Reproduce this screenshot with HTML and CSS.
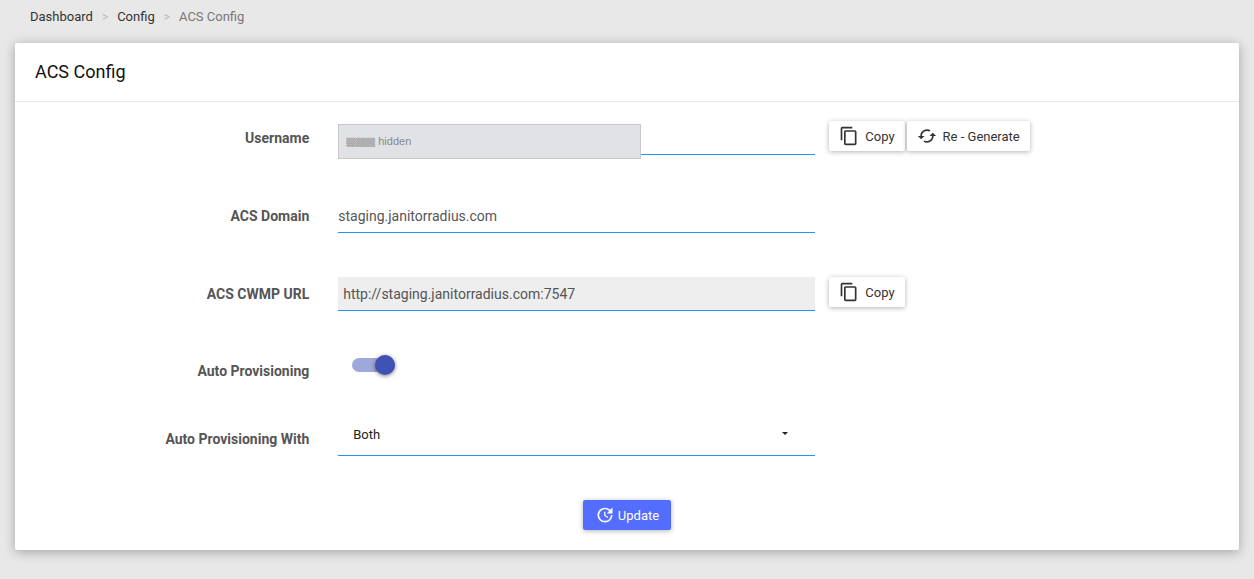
FILE: index.html
```html
<!DOCTYPE html>
<html lang="en">
<head>
<meta charset="UTF-8">
<meta name="viewport" content="width=device-width, initial-scale=1.0">
<title>ACS Config</title>
<link rel="stylesheet" href="styles.css">
</head>
<body>

<nav class="breadcrumb" aria-label="Breadcrumb">
    <a href="#">Dashboard</a>
    <span class="separator">&gt;</span>
    <a href="#">Config</a>
    <span class="separator">&gt;</span>
    <span class="current">ACS Config</span>
</nav>

<main class="card">
    <h1 class="card-title">ACS Config</h1>
    <form class="config-form">
        <div class="row">
            <label class="name" for="username">Username</label>
            <div class="field">
                <input type="text" id="username" class="text-input">
                <div class="mask"><span class="blocks">▒▒▒▒▒▒</span> hidden</div>
            </div>
            <div class="actions">
                <button type="button" class="btn">
                    <svg class="icon" viewBox="0 0 24 24"><path d="M16 1H4c-1.100 0-2 .9-2 2v14h2V3h12V1zm3 4H8c-1.100 0-2 .9-2 2v14c0 1.100.9 2 2 2h11c1.100 0 2-.9 2-2V7c0-1.100-.9-2-2-2zm0 16H8V7h11v14z"/></svg>
                    Copy
                </button>
                <button type="button" class="btn">
                    <svg class="icon" viewBox="0 0 24 24"><path d="M19 8l-4 4h3c0 3.310-2.690 6-6 6-1.010 0-1.970-.25-2.800-.7l-1.460 1.460C8.970 19.540 10.430 20 12 20c4.420 0 8-3.580 8-8h3l-4-4zM6 12c0-3.310 2.690-6 6-6 1.010 0 1.970.25 2.800.7l1.460-1.460C15.030 4.460 13.570 4 12 4c-4.420 0-8 3.580-8 8H1l4 4 4-4H6z"/></svg>
                    Re - Generate
                </button>
            </div>
        </div>
        <div class="row">
            <label class="name" for="domain">ACS Domain</label>
            <div class="field">
                <input type="text" id="domain" class="text-input" value="staging.janitorradius.com">
            </div>
        </div>
        <div class="row url-row">
            <label class="name" for="url">ACS CWMP URL</label>
            <div class="field">
                <input type="text" id="url" class="text-input readonly" value="http://staging.janitorradius.com:7547" readonly>
            </div>
            <div class="actions">
                <button type="button" class="btn">
                    <svg class="icon" viewBox="0 0 24 24"><path d="M16 1H4c-1.100 0-2 .9-2 2v14h2V3h12V1zm3 4H8c-1.100 0-2 .9-2 2v14c0 1.100.9 2 2 2h11c1.100 0 2-.9 2-2V7c0-1.100-.9-2-2-2zm0 16H8V7h11v14z"/></svg>
                    Copy
                </button>
            </div>
        </div>
        <div class="row toggle-row">
            <label class="name" for="auto">Auto Provisioning</label>
            <div class="field">
                <input type="checkbox" id="auto" class="toggle" checked>
            </div>
        </div>
        <div class="row">
            <label class="name" for="with">Auto Provisioning With</label>
            <div class="field select-field">
                <select id="with" class="select">
                    <option>Both</option>
                </select>
            </div>
        </div>
        <div class="submit">
            <button type="submit" class="btn primary">
                <svg class="icon" viewBox="0 0 24 24"><path d="M21 10.120h-6.780l2.740-2.820c-2.730-2.700-7.150-2.800-9.880-.1-2.730 2.710-2.730 7.080 0 9.790s7.150 2.710 9.880 0C18.320 15.650 19 14.080 19 12.100h2c0 1.980-.88 4.550-2.640 6.290-3.510 3.480-9.210 3.480-12.720 0-3.500-3.470-3.530-9.110-.02-12.580s9.140-3.470 12.650 0L21 3v7.120zM12.500 8v4.250l3.500 2.080-.72 1.210L11 13V8h1.500z"/></svg>
                Update
            </button>
        </div>
    </form>
</main>

</body>
</html>
```
FILE: styles.css
```css
* {
    box-sizing: border-box;
}
body {
    margin: 0;
    padding: 0 15px 29px;
    font-family: Roboto, Arial, sans-serif;
    font-size: 13px;
    color: #212121;
    background-color: #e8e8e8;
}
.breadcrumb {
    display: flex;
    gap: 9px;
    padding: 9px 15px 0;
    height: 43px;
    line-height: 16px;
}
.breadcrumb a {
    color: #333;
    text-decoration: none;
}
.breadcrumb .separator {
    color: #bbb;
    font-size: 12px;
}
.breadcrumb .current {
    color: #777;
}
.card {
    background-color: #fff;
    border-radius: 2px;
    box-shadow: 0 2px 12px rgba(0, 0, 0, 0.3);
}
.card-title {
    margin: 0;
    padding: 18px 20px;
    font-size: 18px;
    font-weight: 400;
    line-height: 22px;
    color: #111;
    border-bottom: 1px solid #e8e8e8;
}
.config-form {
    padding: 19px 28px 20px 23px;
}
.row {
    display: grid;
    grid-template-columns: 3fr 5fr 4fr;
    column-gap: 14px;
    min-height: 34px;
    margin-bottom: 44px;
}
.name {
    padding-right: 15px;
    font-size: 14px;
    font-weight: 700;
    line-height: 34px;
    color: #555;
    text-align: right;
}
.field {
    position: relative;
}
.text-input {
    display: block;
    width: 100%;
    height: 34px;
    padding: 0;
    border: none;
    border-bottom: 1px solid #2196f3;
    font-family: inherit;
    font-size: 14px;
    color: #555;
    background-color: #fff;
}
.text-input.readonly {
    padding: 0 5px;
    background-color: #eee;
}
.mask {
    position: absolute;
    top: 3px;
    left: 0;
    width: 303px;
    max-width: 100%;
    height: 35px;
    padding: 0 7px;
    border: 1px solid #c8c8cc;
    font-family: "Liberation Sans", Arial, sans-serif;
    font-size: 11px;
    line-height: 33px;
    color: #888;
    background-color: #e1e2e6;
}
.blocks {
    font-family: "DejaVu Sans Mono", monospace;
    font-size: 8px;
}
.actions {
    display: flex;
    align-items: flex-start;
    gap: 2px;
}
.btn {
    display: flex;
    align-items: center;
    gap: 6px;
    height: 30px;
    padding: 0 10px;
    border: none;
    border-radius: 2px;
    font-family: inherit;
    font-size: 13px;
    color: #333;
    background-color: #fff;
    box-shadow: 0 1px 5px rgba(0, 0, 0, 0.3);
    cursor: pointer;
}
.icon {
    width: 20px;
    height: 20px;
    fill: currentColor;
}
.url-row {
    margin-bottom: 43px;
}
.toggle-row {
    margin-bottom: 34px;
}
.toggle {
    appearance: none;
    display: flex;
    align-items: center;
    justify-content: flex-end;
    width: 43px;
    height: 14px;
    margin: 4px 14px;
    border-radius: 7px;
    background-color: #9fa8da;
    cursor: pointer;
}
.toggle::before {
    content: "";
    width: 20px;
    height: 20px;
    border-radius: 50%;
    background-color: #3f51b5;
    box-shadow: 0 1px 4px rgba(0, 0, 0, 0.5);
}
.select-field::after {
    content: "";
    position: absolute;
    top: 10px;
    right: 27px;
    border: 3px solid transparent;
    border-top-color: #212121;
    pointer-events: none;
}
.select {
    appearance: none;
    width: 100%;
    height: 34px;
    padding: 0 15px 8px;
    border: none;
    border-bottom: 1px solid #2196f3;
    border-radius: 0;
    font-family: inherit;
    font-size: 13px;
    color: #212121;
    background-color: #fff;
}
.submit {
    display: flex;
    justify-content: center;
    padding-left: 5px;
}
.btn.primary {
    gap: 3px;
    padding: 0 12px;
    color: #fff;
    background-color: #536dfe;
}
```
